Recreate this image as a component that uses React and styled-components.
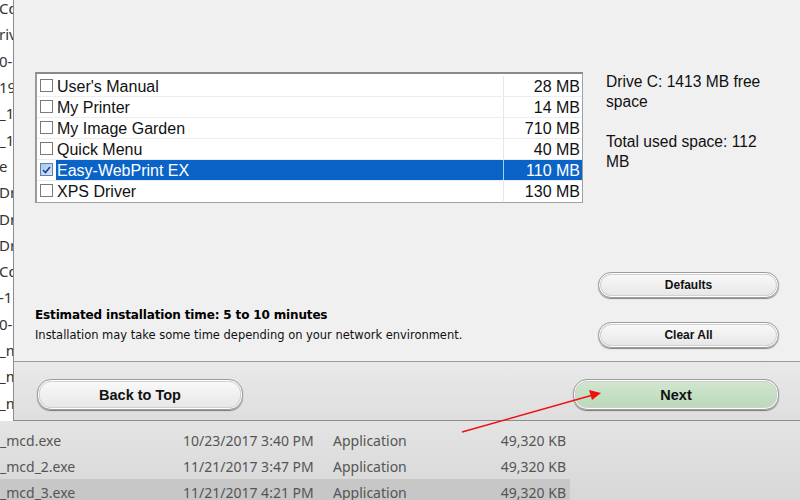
import React from 'react';
import styled, { createGlobalStyle } from 'styled-components';

const GlobalStyle = createGlobalStyle`
  html, body { margin: 0; padding: 0; }
  body { width: 800px; height: 500px; overflow: hidden; background: #e2e2e2; }
`;

const stripNames = ['Cd', 'riv', '0-', '19', '_1', '_1', 'e', 'Dr', 'Dr', 'Dr', 'Cd', '-1', '0-', '_m', '_m', '_m'];

const components = [
  { name: "User's Manual", size: '28 MB' },
  { name: 'My Printer', size: '14 MB' },
  { name: 'My Image Garden', size: '710 MB' },
  { name: 'Quick Menu', size: '40 MB' },
  { name: 'Easy-WebPrint EX', size: '110 MB', checked: true },
  { name: 'XPS Driver', size: '130 MB' },
];

const files = [
  { name: '_mcd.exe', date: '10/23/2017 3:40 PM' },
  { name: '_mcd_2.exe', date: '11/21/2017 3:47 PM' },
  { name: '_mcd_3.exe', date: '11/21/2017 4:21 PM', selected: true },
];

const Screen = styled.div`
  position: relative;
  width: 800px;
  height: 500px;
  display: flex;
  flex-direction: column;
  overflow: hidden;
`;

const Top = styled.div`
  display: flex;
  height: 421px;
  flex: none;
`;

const Strip = styled.div`
  width: 13px;
  background: #fff;
  overflow: hidden;
  display: flex;
  flex-direction: column;
  font-family: 'Noto Sans', sans-serif;
  font-size: 15px;
  color: #333;
`;

const StripItem = styled.div`
  height: 27px;
  line-height: 17px;
  white-space: nowrap;
  margin-left: -1px;
`;

const Dialog = styled.div`
  flex: 1;
  display: flex;
  flex-direction: column;
  border-left: 1px solid #8c8c8c;
  border-bottom: 1px solid #8c8c8c;
  font-family: 'Liberation Sans', Arial, sans-serif;
  color: #000;
`;

const Body = styled.div`
  height: 362px;
  flex: none;
  box-sizing: border-box;
  background: #f0f0f0;
  border-bottom: 1px solid #9a9a9a;
  display: grid;
  grid-template-columns: 548px 181px;
  column-gap: 15px;
  padding: 72px 0 13px 21px;
`;

const LeftCol = styled.div`
  display: flex;
  flex-direction: column;
`;

const ListBox = styled.div`
  width: 548px;
  height: 131px;
  box-sizing: border-box;
  background: #fff;
  border: 1px solid #a0a0a0;
  border-top: 2px solid #8a8a8a;
  border-left: 2px solid #9a9a9a;
  padding-top: 2px;
`;

const Row = styled.div`
  display: flex;
  height: 21px;
  align-items: stretch;
  border-bottom: 1px solid ${p => (p.$last ? 'transparent' : '#ededed')};
  box-sizing: border-box;
  font-size: 16px;
`;

const Check = styled.span`
  width: 13px;
  height: 13px;
  margin: 3px 3px 0 3px;
  box-sizing: border-box;
  border: 1px solid ${p => (p.$on ? '#5a7fb0' : '#7a7a7a')};
  background: ${p => (p.$on ? 'linear-gradient(135deg, #a9c6ec, #d8e6f7)' : '#fff')};
  display: flex;
  align-items: center;
  justify-content: center;
  flex: none;
`;

const NameCell = styled.div`
  flex: 1;
  display: flex;
  align-items: center;
  padding: 1px 0 0 1px;
  background: ${p => (p.$sel ? '#0a64c8' : 'transparent')};
  color: ${p => (p.$sel ? '#fff' : '#111')};
`;

const SizeCell = styled.div`
  width: 76px;
  display: flex;
  align-items: center;
  justify-content: flex-end;
  padding: 1px 2px 0 0;
  border-left: 1px solid ${p => (p.$sel ? '#9fd5ee' : '#e6e6e6')};
  background: ${p => (p.$sel ? '#0a64c8' : 'transparent')};
  color: ${p => (p.$sel ? '#fff' : '#111')};
`;

const Estimate = styled.div`
  margin-top: auto;
  padding-bottom: 5px;
`;

const EstTitle = styled.div`
  font-family: 'DejaVu Sans', sans-serif;
  font-weight: bold;
  font-size: 12px;
  letter-spacing: -0.15px;
  line-height: 15px;
`;

const EstNote = styled.div`
  font-family: 'DejaVu Sans', sans-serif;
  font-size: 11.5px;
  letter-spacing: -0.02px;
  margin-top: 5px;
  line-height: 15px;
  color: #111;
`;

const RightCol = styled.div`
  display: flex;
  flex-direction: column;
`;

const Info = styled.p`
  margin: 0 0 20px 8px;
  font-size: 15.6px;
  line-height: 20px;
  color: #111;
  width: 170px;
`;

const Buttons = styled.div`
  margin-top: auto;
  display: flex;
  flex-direction: column;
  gap: 24px;
`;

const Pill = styled.button`
  width: ${p => p.$w || 181}px;
  height: ${p => p.$h || 26}px;
  border-radius: 14px;
  border: 1px solid #9c9c9c;
  background: ${p =>
    p.$green
      ? 'linear-gradient(#d2e7d0, #b9d9b8)'
      : 'linear-gradient(#fafafa, #e6e6e6)'};
  box-shadow: inset 0 0 0 1px #fff, inset 0 0 0 2px #d0d0d0, 0 1px 1px rgba(0, 0, 0, 0.45);
  font-family: 'Liberation Sans', Arial, sans-serif;
  font-weight: bold;
  font-size: ${p => p.$fs || 12}px;
  color: #111;
  padding: 0;
  cursor: default;
`;

const Footer = styled.div`
  flex: 1;
  background: linear-gradient(#e9e9e9, #dedede);
  display: flex;
  justify-content: space-between;
  align-items: flex-start;
  padding: 17px 21px 0 23px;
`;

const Explorer = styled.div`
  flex: 1;
  background: linear-gradient(#e4e4e4, #d6d6d6);
  padding-top: 6px;
  font-family: 'Noto Sans', 'Open Sans', sans-serif;
  font-size: 14px;
  color: #555;
`;

const FileRow = styled.div`
  display: grid;
  grid-template-columns: 183px 150px 140px 93px;
  width: 570px;
  height: 26px;
  align-items: center;
  background: ${p => (p.$sel ? '#c7c7c7' : 'transparent')};
`;

const SizeText = styled.span`
  text-align: right;
`;

const Arrow = styled.svg`
  position: absolute;
  left: 455px;
  top: 385px;
  pointer-events: none;
`;

const CheckMark = () => (
  <svg width="9" height="8" viewBox="0 0 9 8">
    <path d="M1 4 L3.5 6.5 L8 1" fill="none" stroke="#1a3f9a" strokeWidth="1.6" />
  </svg>
);

export default function App() {
  return (
    <Screen>
      <GlobalStyle />
      <Top>
        <Strip>
          {stripNames.map((s, i) => (
            <StripItem key={i}>{s}</StripItem>
          ))}
        </Strip>
        <Dialog>
          <Body>
            <LeftCol>
              <ListBox>
                {components.map((c, i) => (
                  <Row key={c.name} $last={i === components.length - 1}>
                    <Check $on={c.checked}>{c.checked && <CheckMark />}</Check>
                    <NameCell $sel={c.checked}>{c.name}</NameCell>
                    <SizeCell $sel={c.checked}>{c.size}</SizeCell>
                  </Row>
                ))}
              </ListBox>
              <Estimate>
                <EstTitle>Estimated installation time: 5 to 10 minutes</EstTitle>
                <EstNote>Installation may take some time depending on your network environment.</EstNote>
              </Estimate>
            </LeftCol>
            <RightCol>
              <Info>Drive C: 1413 MB free space</Info>
              <Info>Total used space: 112 MB</Info>
              <Buttons>
                <Pill>Defaults</Pill>
                <Pill>Clear All</Pill>
              </Buttons>
            </RightCol>
          </Body>
          <Footer>
            <Pill $w={206} $h={31} $fs={14.5}>Back to Top</Pill>
            <Pill $w={206} $h={31} $fs={14.5} $green>Next</Pill>
          </Footer>
        </Dialog>
      </Top>
      <Explorer>
        {files.map(f => (
          <FileRow key={f.name} $sel={f.selected}>
            <span>{f.name}</span>
            <span>{f.date}</span>
            <span>Application</span>
            <SizeText>49,320 KB</SizeText>
          </FileRow>
        ))}
      </Explorer>
      <Arrow width="160" height="60" viewBox="0 0 160 60">
        <line x1="7" y1="47" x2="138" y2="10" stroke="#f01010" strokeWidth="1.4" />
        <polygon points="146,8 134,5 137,15" fill="#f01010" />
      </Arrow>
    </Screen>
  );
}
